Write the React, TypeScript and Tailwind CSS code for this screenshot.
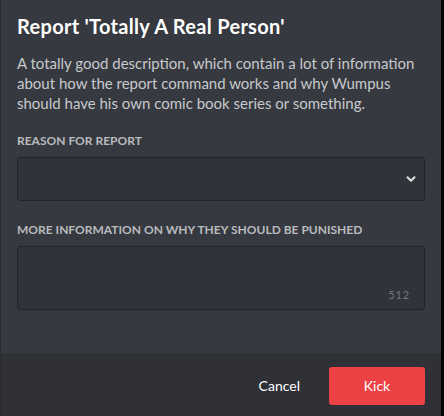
import { ChevronDown } from 'lucide-react';

export default function App() {
  return (
    <div className="flex h-[416px] w-[444px] bg-black" style={{ fontFamily: 'Lato, "Noto Sans", sans-serif' }}>
      <div className="flex w-[441px] flex-col border-l border-[#2a2c31] bg-[#36393f]">
        {/* Header */}
        <div className="px-4 pt-[14px]">
          <h1 className="text-[20px] font-bold leading-[24px] tracking-[0.015em] text-white">Report 'Totally A Real Person'</h1>
          <p className="mt-[15px] text-[15px] leading-[20px] text-[#c7c9cc]">
            A totally good description, which contain a lot of information about how the report command works and why Wumpus
            should have his own comic book series or something.
          </p>
        </div>

        {/* Form */}
        <div className="flex flex-1 flex-col px-4 pt-[20px]">
          <label className="text-[12px] font-bold uppercase leading-[16px] text-[#b9bbbe]">Reason for report</label>
          <div className="mt-[8px] flex h-[44px] items-center justify-end rounded-[3px] border border-[#222428] bg-[#303339] pr-[6px]">
            <ChevronDown className="h-[14px] w-[14px] text-[#dcddde]" strokeWidth={3.5} />
          </div>

          <label className="mt-[21px] text-[12px] font-bold uppercase leading-[16px] text-[#b9bbbe]">
            More information on why they should be punished
          </label>
          <div className="mt-[8px] flex h-[64px] items-end justify-end rounded-[3px] border border-[#222428] bg-[#303339] pb-[6px] pr-[14px]">
            <span className="text-[11px] tracking-[0.08em] text-[#72767d]">512</span>
          </div>
        </div>

        {/* Footer */}
        <div className="flex h-[63px] items-center justify-end gap-[29px] bg-[#2f3136] px-4 pt-[2px]">
          <button className="text-[14px] text-white">Cancel</button>
          <button className="h-[38px] w-[96px] rounded-[3px] bg-[#ed4245] text-[14px] text-white">Kick</button>
        </div>
      </div>
    </div>
  );
}
